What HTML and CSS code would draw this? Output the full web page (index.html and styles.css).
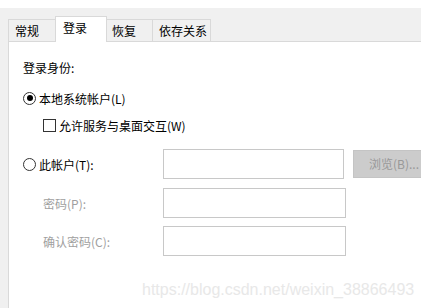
FILE: index.html
```html
<!DOCTYPE html>
<html lang="zh-CN">
<head>
<meta charset="utf-8">
<title>登录</title>
<link rel="stylesheet" href="styles.css">
</head>
<body>
<div class="topstrip"></div>
<div class="dialog">
  <div class="tabs">
    <div class="tab t1">常规</div>
    <div class="tab sel">登录</div>
    <div class="tab t3">恢复</div>
    <div class="tab t4">依存关系</div>
  </div>
  <div class="panel">
    <div class="row heading">登录身份:</div>
    <div class="row radio-row">
      <span class="radio on"></span><span class="lbl">本地系统帐户(L)</span>
    </div>
    <div class="row check-row">
      <span class="check"></span><span class="lbl">允许服务与桌面交互(W)</span>
    </div>
    <div class="row field account">
      <div class="fl"><span class="radio"></span><span class="lbl">此帐户(T):</span></div>
      <div class="input w1"></div>
      <div class="btn">浏览(B)...</div>
    </div>
    <div class="row field pw">
      <div class="fl indent dis">密码(P):</div>
      <div class="input w2"></div>
    </div>
    <div class="row field pw2">
      <div class="fl indent dis">确认密码(C):</div>
      <div class="input w2"></div>
    </div>
    <div class="watermark">https://blog.csdn.net/weixin_38866493</div>
  </div>
</div>
</body>
</html>
```
FILE: styles.css
```css
html, body {
  margin: 0;
  padding: 0;
  width: 421px;
  height: 308px;
  overflow: hidden;
  background: #f0f0f0;
  font-family: "Noto Sans CJK SC", "Noto Sans", sans-serif;
  font-size: 12px;
  color: #000;
}
.topstrip {
  height: 8px;
  background: #fff;
}
.dialog {
  height: 300px;
  padding-left: 8px;
  padding-top: 8px;
  box-sizing: border-box;
  display: flex;
  flex-direction: column;
}
.tabs {
  display: flex;
  align-items: flex-end;
  height: 25px;
}
.tab {
  box-sizing: border-box;
  height: 22px;
  border: 1px solid #d9d9d9;
  border-bottom: none;
  background: #f0f0f0;
  line-height: 21px;
  padding-left: 6px;
  white-space: nowrap;
}
.t1 { width: 49px; }
.sel {
  position: relative;
  z-index: 1;
  width: 52px;
  height: 26px;
  margin-left: -2px;
  margin-bottom: -1px;
  background: #fff;
  line-height: 22px;
  padding-left: 7px;
}
.t3 { width: 48px; margin-left: -2px; }
.t4 { width: 59px; margin-left: -1px; }
.panel {
  flex: 1;
  background: #fff;
  border-top: 1px solid #d9d9d9;
  border-left: 1px solid #d9d9d9;
  padding-left: 14px;
  display: flex;
  flex-direction: column;
}
.row {
  display: flex;
  align-items: center;
  white-space: nowrap;
}
.heading {
  height: 20px;
  margin-top: 15px;
}
.radio-row {
  height: 20px;
  margin-top: 11px;
}
.check-row {
  height: 20px;
  margin-top: 7px;
  padding-left: 20px;
}
.radio {
  box-sizing: border-box;
  width: 13px;
  height: 13px;
  border: 1px solid #333;
  border-radius: 50%;
  background: #fff;
  display: flex;
  align-items: center;
  justify-content: center;
  margin-right: 3px;
  flex: none;
}
.radio.on::after {
  content: "";
  width: 6px;
  height: 6px;
  border-radius: 50%;
  background: #000;
}
.check {
  box-sizing: border-box;
  width: 13px;
  height: 13px;
  border: 1px solid #333;
  background: #fff;
  margin-right: 3px;
  flex: none;
}
.field {
  height: 30px;
}
.account { margin-top: 14px; }
.pw { margin-top: 9px; }
.pw2 { margin-top: 8px; }
.fl {
  width: 140px;
  display: flex;
  align-items: center;
  flex: none;
}
.indent { padding-left: 20px; box-sizing: border-box; }
.dis { color: #a0a0a0; }
.input {
  box-sizing: border-box;
  height: 30px;
  border: 1px solid #c8c8c8;
  background: #fff;
  flex: none;
}
.w1 { width: 181px; }
.w2 { width: 183px; }
.btn {
  box-sizing: border-box;
  margin-left: 9px;
  width: 80px;
  height: 28px;
  background: #cccccc;
  border: 1px solid #c4c4c4;
  color: #999;
  line-height: 26px;
  padding-left: 15px;
  flex: none;
}
.watermark {
  margin-top: 24px;
  margin-left: 119px;
  font-family: "Liberation Sans", Arial, sans-serif;
  font-size: 16px;
  line-height: 20px;
  color: #e8e8e8;
  white-space: nowrap;
}
```
